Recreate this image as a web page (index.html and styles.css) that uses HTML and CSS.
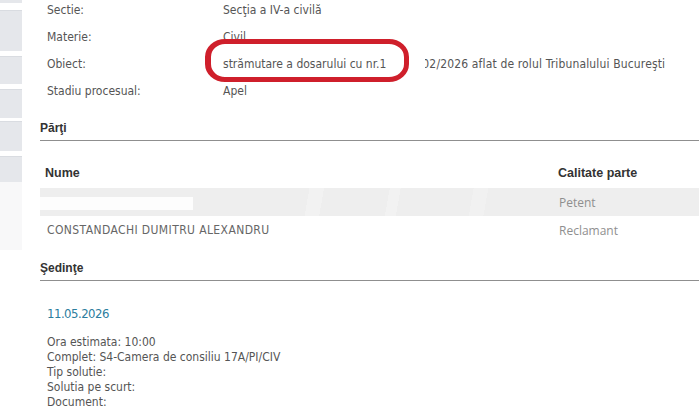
FILE: index.html
```html
<!DOCTYPE html>
<html lang="ro">
<head>
<meta charset="utf-8">
<title>Dosar</title>
<link rel="stylesheet" href="styles.css">
</head>
<body>
<div class="page">
  <aside class="sidebar">
    <div class="blk blk-top"></div>
    <div class="blk b1"></div>
    <div class="blk b2"></div>
    <div class="blk b3"></div>
    <div class="blk b4"></div>
    <div class="blk b5"></div>
    <div class="blk-faint"></div>
  </aside>
  <main class="content">
    <div class="info">
      <div class="row"><span class="lbl">Sectie:</span><span class="val">Secţia a IV-a civilă</span></div>
      <div class="row"><span class="lbl">Materie:</span><span class="val">Civil</span></div>
      <div class="row"><span class="lbl">Obiect:</span><span class="val obj">strămutare a dosarului cu nr.1<span class="gap"></span><span class="rest">02/2026 aflat de rolul Tribunalului Bucureşti</span><span class="redact"></span></span></div>
      <div class="row"><span class="lbl">Stadiu procesual:</span><span class="val">Apel</span></div>
      <div class="oval"></div>
    </div>

    <h3 class="sect">Părţi</h3>
    <div class="parties">
      <div class="prow head"><span class="c1">Nume</span><span class="c2">Calitate parte</span></div>
      <div class="prow alt"><span class="c1"><span class="hide"></span></span><span class="c2 q">Petent</span><span class="wm"></span></div>
      <div class="prow"><span class="c1 nm">CONSTANDACHI DUMITRU ALEXANDRU</span><span class="c2 q">Reclamant</span></div>
    </div>

    <h3 class="sect">Şedinţe</h3>
    <div class="session">
      <div class="date">11.05.2026</div>
      <div class="det">
        <div>Ora estimata: 10:00</div>
        <div>Complet: S4-Camera de consiliu 17A/PI/CIV</div>
        <div>Tip solutie:</div>
        <div>Solutia pe scurt:</div>
        <div>Document:</div>
      </div>
    </div>
  </main>
</div>
</body>
</html>
```

FILE: styles.css
```css
html, body { margin: 0; padding: 0; background: #fff; }
body { width: 699px; height: 419px; overflow: hidden; font-family: "DejaVu Sans", Verdana, sans-serif; font-stretch: condensed; font-size: 12px; color: #555; }
.page { display: grid; grid-template-columns: 22px 1fr; column-gap: 18px; }

.sidebar { display: flex; flex-direction: column; }
.blk { background: #e5e7eb; border-top: 1px solid #d9dce1; }
.blk-top { height: 3px; border-top: 0; margin-bottom: 7px; }
.b1 { height: 40px; margin-bottom: 5px; }
.b2 { height: 27px; margin-bottom: 5px; }
.b3 { height: 28px; margin-bottom: 3px; }
.b4 { height: 29px; margin-bottom: 5px; }
.b5 { height: 25px; }
.blk-faint { height: 68px; background: #f8f8f9; }

.content { min-width: 0; }
.info { position: relative; margin-top: -4px; padding-left: 7px; }
.row { display: flex; align-items: center; height: 27px; }
.lbl { width: 176px; flex: none; }
.val { white-space: nowrap; }
.obj { position: relative; }
.gap { display: inline-block; width: 36px; }
.rest { letter-spacing: 0.15px; }
.redact { position: absolute; left: 166px; top: -2px; width: 36px; height: 18px; background: #fff; }
.oval { position: absolute; left: 165px; top: 43px; width: 193px; height: 33px; border: 5px solid #cf1f2b; border-left-width: 6px; border-radius: 20px / 18px; }

.sect { margin: 0; font-family: "Liberation Sans", Arial, sans-serif; font-stretch: normal; font-size: 12px; line-height: 14px; font-weight: bold; color: #333; border-bottom: 1px solid #8f8f8f; padding: 17px 0 5px; }

.parties { padding-top: 20px; }
.prow { position: relative; display: flex; align-items: center; height: 28px; overflow: hidden; }
.prow.head { height: 27px; align-items: flex-end; padding-bottom: 8px; box-sizing: border-box; font-family: "Liberation Sans", Arial, sans-serif; font-stretch: normal; font-size: 12.5px; font-weight: bold; color: #333; }
.prow.head .c1 { padding-left: 5px; }
.prow.alt { background: #eeeeee; }
.c1 { width: 518px; flex: none; padding-left: 7px; box-sizing: border-box; }
.c2 { flex: none; }
.q { font-family: "Open Sans", sans-serif; font-stretch: normal; font-size: 12px; color: #8f8f8f; padding-left: 1px; }
.nm { color: #666; letter-spacing: 0.4px; }
.hide { display: block; width: 153px; height: 13px; margin-left: -7px; margin-top: 2px; background: #fdfdfd; }
.wm { position: absolute; left: 160px; top: 0; width: 360px; height: 28px; background: linear-gradient(100deg, transparent 0 30%, rgba(255,255,255,.25) 30% 34%, transparent 34% 52%, rgba(255,255,255,.25) 52% 55%, transparent 55% 75%, rgba(255,255,255,.2) 75% 79%, transparent 79%); pointer-events: none; }

.session { padding: 25px 0 0 7px; }
.date { color: #2c7d9e; font-size: 13px; line-height: 15px; letter-spacing: -0.5px; }
.det { margin-top: 14px; line-height: 15px; }
```
